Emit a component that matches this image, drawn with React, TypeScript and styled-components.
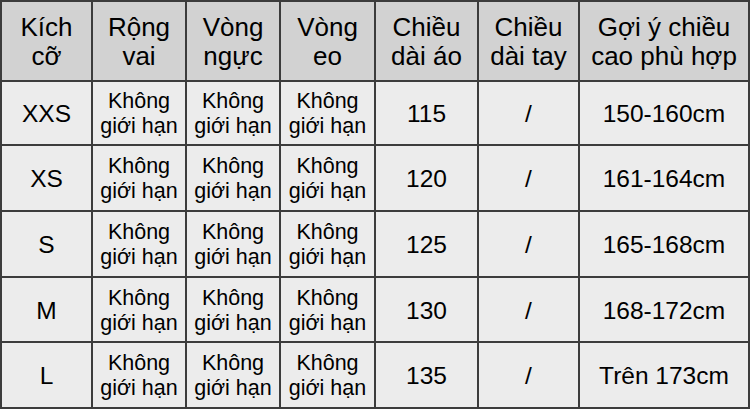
import React from "react";
import styled, { createGlobalStyle } from "styled-components";

const Global = createGlobalStyle`
  html, body { margin: 0; padding: 0; background: #ffffff; }
  body { font-family: "Liberation Sans", Arial, sans-serif; }
`;

const Grid = styled.div`
  width: 750px;
  height: 409px;
  box-sizing: border-box;
  display: grid;
  grid-template-columns: 89px 92px 92px 93px 101px 99px 168px;
  grid-template-rows: 78px 62px 64px 64px 63px 64px;
  gap: 2px;
  padding: 2px;
  background: #3c3c3c;
`;

const HeadCell = styled.div`
  background: #d2d2d2;
  color: #000000;
  display: flex;
  align-items: center;
  justify-content: center;
  text-align: center;
  font-size: 26px;
  line-height: 29px;
  white-space: pre-line;
  padding-top: 2px;
`;

const Cell = styled.div<{ $small?: boolean }>`
  background: #ececec;
  color: #000000;
  display: flex;
  align-items: center;
  justify-content: center;
  text-align: center;
  font-size: ${(p) => (p.$small ? "21.5px" : "24.5px")};
  line-height: ${(p) => (p.$small ? "25px" : "28px")};
  white-space: pre-line;
  padding-top: 2px;
`;

const headers = [
  "Kích\ncỡ",
  "Rộng\nvai",
  "Vòng\nngực",
  "Vòng\neo",
  "Chiều\ndài áo",
  "Chiều\ndài tay",
  "Gợi ý chiều\ncao phù hợp",
];

const rows = [
  { size: "XXS", len: "115", h: "150-160cm" },
  { size: "XS", len: "120", h: "161-164cm" },
  { size: "S", len: "125", h: "165-168cm" },
  { size: "M", len: "130", h: "168-172cm" },
  { size: "L", len: "135", h: "Trên 173cm" },
];

const NL = "Không\ngiới hạn";

export default function App() {
  return (
    <>
      <Global />
      <Grid>
        {headers.map((h) => (
          <HeadCell key={h}>{h}</HeadCell>
        ))}
        {rows.map((r) => (
          <React.Fragment key={r.size}>
            <Cell>{r.size}</Cell>
            <Cell $small>{NL}</Cell>
            <Cell $small>{NL}</Cell>
            <Cell $small>{NL}</Cell>
            <Cell>{r.len}</Cell>
            <Cell>/</Cell>
            <Cell>{r.h}</Cell>
          </React.Fragment>
        ))}
      </Grid>
    </>
  );
}
